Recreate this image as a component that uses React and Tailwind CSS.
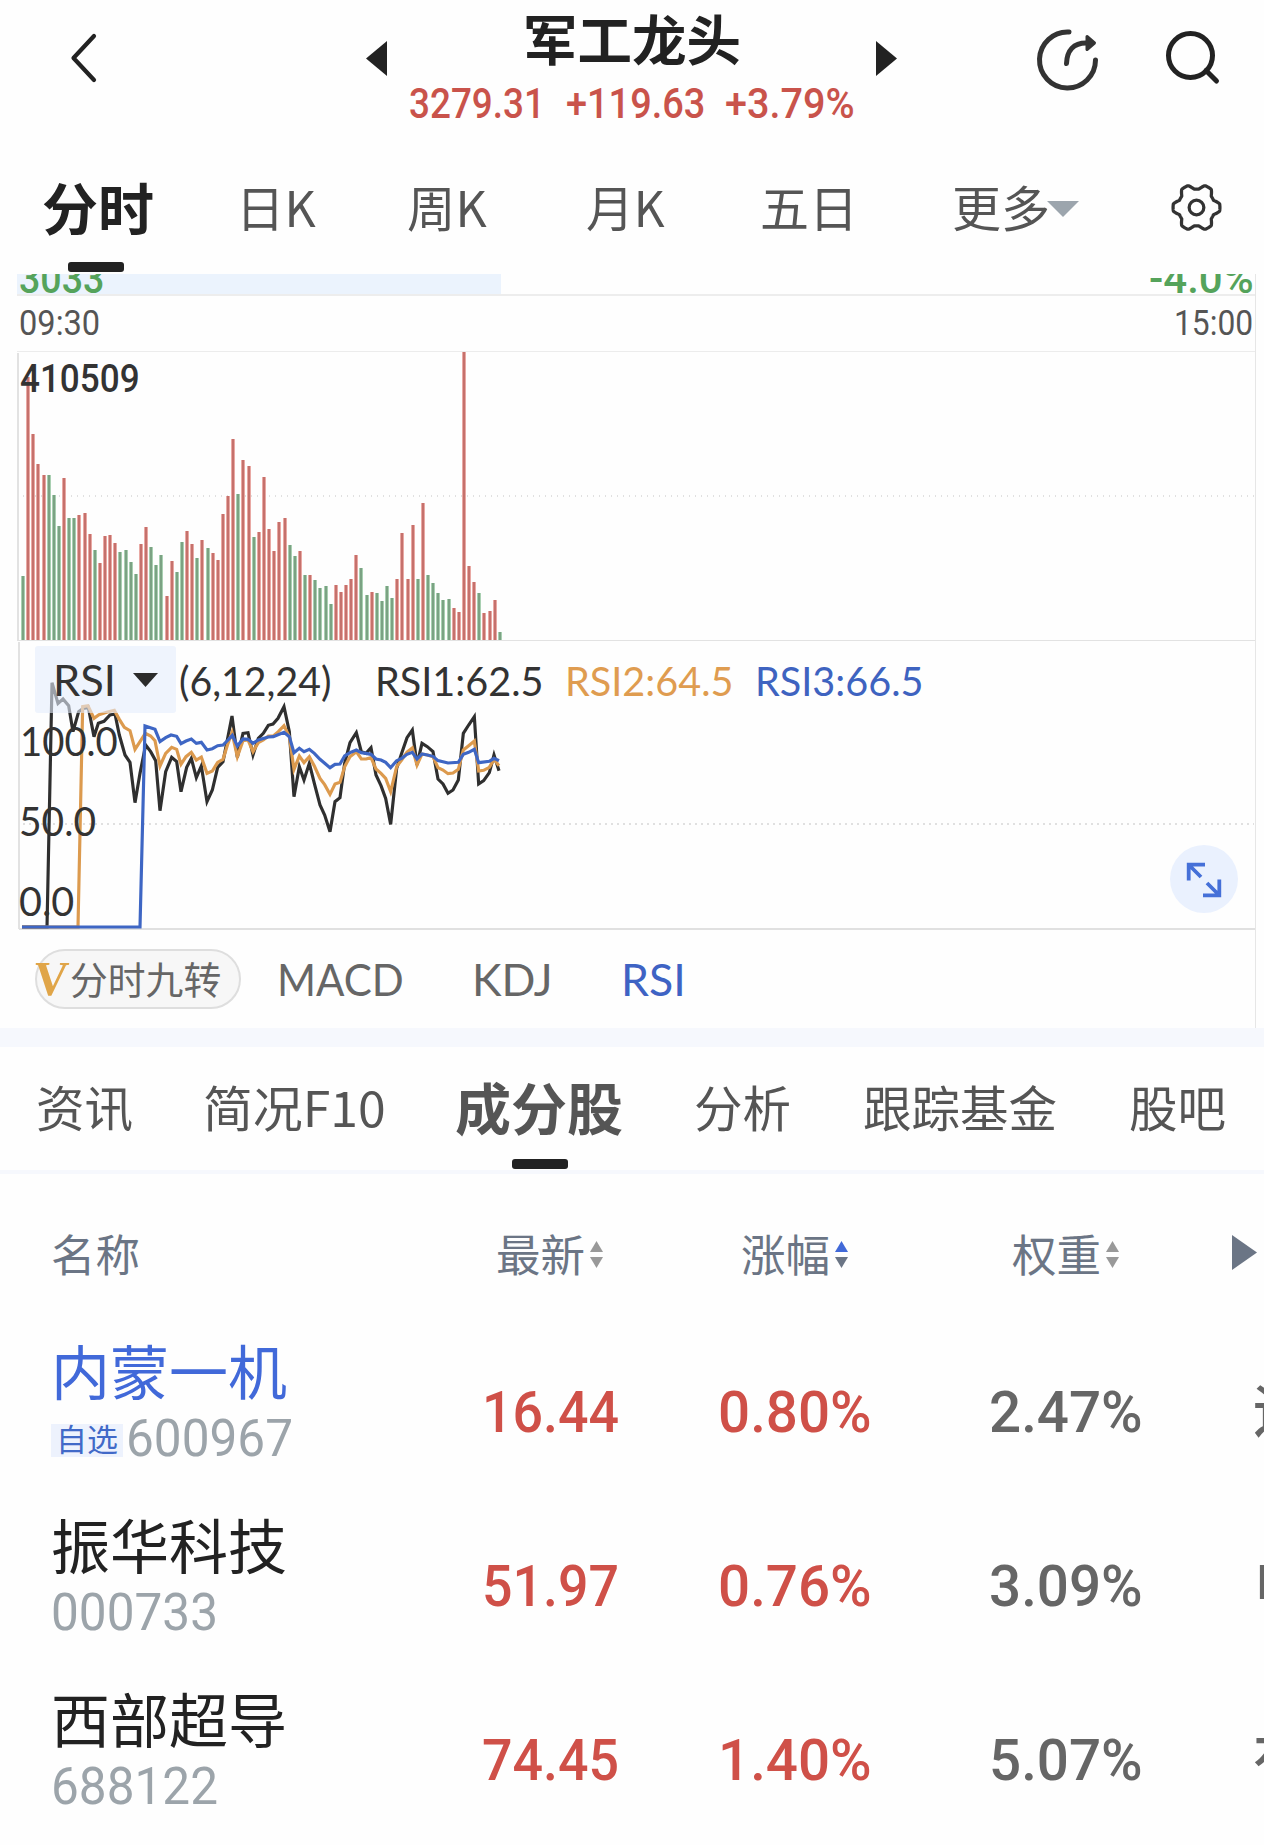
import React, { useLayoutEffect, useRef, useState } from 'react';
import clsx from 'clsx';

const CJK = "font-['Noto_Sans_CJK_SC',sans-serif]";
const NUM = "font-['Roboto','Noto_Sans_CJK_SC',sans-serif] font-medium";
const LATO = "font-['Lato','Noto_Sans_CJK_SC',sans-serif]";

// top edge of each minute bar, in thirds of a pixel, and its direction
const VOLUME = 'G708 R110 R282 R372 R405 G405 G465 G558 R414 G534 G534 R525 R519 R582 G630 R669 R588 R585 R609 G636 G630 G666 G702 R612 R561 G621 G675 G645 R768 R663 G696 G606 R573 R612 G654 R600 G624 R639 R660 R522 R468 R297 G462 R360 R378 G591 R576 R411 R567 R633 R546 R534 G615 G648 R633 G705 R705 G720 G744 G738 G792 R735 R756 R735 R717 R645 G684 G765 R756 G759 G783 G738 G774 R717 R579 R717 R555 G717 R489 G705 G729 G759 G780 G777 R804 R816 R36 R678 R726 G759 R819 R813 R780 G876'.split(' ');

const RSI_LINES = [
  {
    color: '#2f2f2f',
    points: '66,861 141,861 156,128 174,190 189,177 206,197 219,275 236,215 250,205 265,202 282,290 295,250 312,244 330,225 345,222 358,285 375,345 390,367 405,488 420,400 437,315 452,335 467,362 480,512 497,395 515,352 530,365 543,455 560,382 574,355 589,413 604,378 621,485 637,450 653,382 669,365 684,290 696,228 712,352 729,280 744,278 759,345 775,295 790,280 805,256 819,252 834,235 852,200 868,275 882,470 898,380 912,420 928,370 943,430 960,495 974,525 990,575 1005,485 1020,473 1034,370 1050,308 1069,278 1084,335 1098,340 1113,323 1128,405 1143,437 1157,475 1172,553 1190,385 1205,340 1221,293 1237,270 1251,375 1266,310 1282,320 1299,335 1314,417 1329,432 1344,460 1359,450 1375,420 1390,280 1406,255 1423,230 1436,432 1451,422 1468,398 1482,345 1497,392',
  },
  {
    color: '#dc9a4e',
    points: '66,861 234,861 248,200 264,197 282,235 297,224 320,217 343,211 358,238 373,262 390,272 405,328 420,305 436,280 452,288 465,302 480,378 497,340 515,322 530,328 543,373 558,350 574,337 589,360 604,351 621,400 637,393 653,367 669,358 684,310 696,278 712,350 729,302 744,300 759,335 775,308 790,300 805,288 820,288 835,275 852,257 868,290 882,388 898,348 912,368 928,350 943,378 960,415 974,434 990,463 1005,432 1020,427 1034,380 1050,350 1069,335 1084,357 1098,357 1113,353 1128,387 1143,400 1157,415 1172,455 1190,380 1205,360 1221,336 1237,324 1251,375 1266,342 1282,345 1299,350 1314,383 1329,390 1344,401 1359,399 1375,388 1390,330 1406,317 1423,303 1436,393 1451,391 1468,382 1482,358 1497,377',
  },
  {
    color: '#3e66c4',
    points: '66,861 420,861 435,258 465,268 480,305 497,293 513,285 530,289 543,311 558,303 574,297 589,310 604,307 621,330 637,326 653,317 669,315 684,300 697,286 712,318 729,297 744,298 759,310 775,300 805,291 820,290 852,277 868,290 882,338 898,325 912,335 928,328 943,340 960,358 990,383 1005,373 1020,372 1034,348 1050,338 1069,330 1084,338 1098,340 1113,343 1128,357 1143,360 1157,367 1172,383 1190,362 1205,355 1221,343 1237,337 1251,357 1266,342 1282,345 1299,349 1314,362 1344,369 1375,367 1390,343 1406,337 1423,328 1436,368 1468,364 1482,355 1497,362',
  },
];

const STOCKS = [
  { name: '内蒙一机', code: '600967', own: true, price: '16.44', change: '0.80%', weight: '2.47%', sector: '运' },
  { name: '振华科技', code: '000733', price: '51.97', change: '0.76%', weight: '3.09%', sector: '电' },
  { name: '西部超导', code: '688122', price: '74.45', change: '1.40%', weight: '5.07%', sector: '有' },
];

// Squeezes or stretches one line of text to the width of its box
function Fit({ className, children }) {
  const box = useRef(null);
  const text = useRef(null);
  const [ratio, setRatio] = useState(1);

  useLayoutEffect(() => {
    setRatio(box.current.clientWidth / text.current.offsetWidth);
  }, [children]);

  return (
    <div ref={box} className={clsx('shrink-0 whitespace-nowrap', className)}>
      <span ref={text} className="inline-block origin-left" style={{ transform: `scaleX(${ratio})` }}>
        {children}
      </span>
    </div>
  );
}

function GearIcon() {
  const points = Array.from({ length: 180 }, (_, i) => {
    const a = (i / 180) * Math.PI * 2;
    const wave = Math.max(-1, Math.min(0.8, Math.cos(a * 6) * 1.35));
    const r = 20.8 + 2.7 * wave;
    return `${(25 + r * Math.cos(a)).toFixed(2)},${(25 + r * Math.sin(a)).toFixed(2)}`;
  }).join(' ');
  return (
    <svg className="ml-[92px] mt-[4px] size-[51px] shrink-0" viewBox="0 0 50 50" fill="none" stroke="#333" strokeWidth="3.2" strokeLinejoin="round">
      <polygon points={points} />
      <circle cx="25" cy="25" r="7.200" />
    </svg>
  );
}

function Header() {
  return (
    <div className="flex h-[155px] items-start">
      <svg className="ml-[68px] mt-[30px] h-[56px] w-[32px] shrink-0" viewBox="0 0 32 56" fill="none" stroke="#222" strokeWidth="4.200" strokeLinecap="round" strokeLinejoin="round">
        <path d="M26 6 5.500 28 26 50" />
      </svg>
      <svg className="ml-[266px] mt-[41px] h-[35px] w-[21px] shrink-0" viewBox="0 0 21 35" fill="#222">
        <path d="M21 0V35L0 17.500Z" />
      </svg>
      <div className="ml-[22px] w-[446px] shrink-0">
        <Fit className={clsx('ml-[114px] h-[74px] w-[218px] text-[54px] font-bold leading-[76px] text-[#222]', CJK)}>军工龙头</Fit>
        <div className={clsx('mt-[8px] flex h-[44px] text-[42px] leading-[44px] text-[#c9534b]', NUM)}>
          <Fit className="w-[136px]">3279.31</Fit>
          <Fit className="ml-[21px] w-[139px]">+119.63</Fit>
          <Fit className="ml-[20px] w-[130px]">+3.79%</Fit>
        </div>
      </div>
      <svg className="ml-[21px] mt-[41px] h-[35px] w-[21px] shrink-0" viewBox="0 0 21 35" fill="#222">
        <path d="M0 0V35L21 17.500Z" />
      </svg>
      <svg className="ml-[136px] mt-[26px] size-[68px] shrink-0" viewBox="0 0 68 68" fill="none" stroke="#333" strokeWidth="5" strokeLinecap="round">
        <path d="M36 6A28 28 0 1 0 62.500 34" />
        <path d="M33.500 37.500C34 24 41 17 53 17" />
        <path d="M54 10.500 61.500 17 54 23.500Z" fill="#333" strokeWidth="3" strokeLinejoin="round" />
      </svg>
      <svg className="ml-[61px] mt-[27px] size-[64px] shrink-0" viewBox="0 0 64 64" fill="none" stroke="#222" strokeWidth="5" strokeLinecap="round">
        <circle cx="28.500" cy="28.500" r="22" />
        <path d="M44 43.500 54.500 54" />
      </svg>
    </div>
  );
}

function PeriodTabs() {
  return (
    <div>
      <div className={clsx('flex h-[107px] items-center pb-[6px] text-[49px] leading-[60px] text-[#555]', CJK)}>
        <div className="ml-[42px] w-[112px] shrink-0 text-[56px] font-bold text-[#222]">分时</div>
        <Fit className="ml-[82px] w-[80px]">日K</Fit>
        <Fit className="ml-[91px] w-[80px]">周K</Fit>
        <Fit className="ml-[99px] w-[79px]">月K</Fit>
        <div className="ml-[95px] w-[98px] shrink-0">五日</div>
        <div className="ml-[94px] w-[98px] shrink-0">更多</div>
        <svg className="ml-[-3px] mt-[6px] h-[16px] w-[32px] shrink-0" viewBox="0 0 32 16" fill="#9ca5ad">
          <path d="M0 0H32L16 16Z" />
        </svg>
        <GearIcon />
      </div>
      <div className="mb-[2px] ml-[68px] h-[10px] w-[56px] rounded-[3px] bg-[#222]" />
    </div>
  );
}

function VolumeChart() {
  return (
    <div className="relative h-[290px]">
      <svg className="block h-[290px] w-[1238px]" viewBox="17 351 1238 290" shapeRendering="crispEdges">
        <path d="M17 351.500H1255" stroke="#ececec" />
        <path d="M18 353V640" stroke="#e2e2e2" strokeWidth="2" />
        <path d="M23 496H1254" stroke="#e0e0e0" strokeWidth="2" strokeDasharray="1 5" />
        <path d="M17 640.500H1255" stroke="#e2e2e2" />
        {VOLUME.map((bar, i) => {
          const x = Math.round((69 + i * 15.383) / 3);
          const h = (900 - Number(bar.slice(1))) / 3;
          const up = bar[0] === 'R';
          return (
            <g key={i}>
              <rect x={x - 2} y={640 - h} width="4" height={h} fill={up ? '#e9a9a4' : '#a9d0b2'} />
              <rect x={x - 1} y={640 - h} width="2" height={h} fill={up ? '#c5716c' : '#7ba283'} />
            </g>
          );
        })}
      </svg>
      <Fit className={clsx('absolute left-[3px] top-[8px] w-[120px] text-[38px] leading-[40px] text-[#333]', NUM)}>410509</Fit>
    </div>
  );
}

function RsiChart() {
  return (
    <div className={clsx('relative h-[289px] text-[41px] leading-[40px] text-[#333]', LATO)}>
      <svg className="block h-[289px] w-[1238px]" viewBox="17 641 1238 289">
        <path d="M19 642V929" stroke="#e2e2e2" strokeWidth="2" />
        <path d="M23 824H1254" stroke="#e0e0e0" strokeWidth="2" strokeDasharray="2 4" />
        <path d="M19 929H1255" stroke="#e0e0e0" strokeWidth="2" />
        <g transform="translate(0 640) scale(.33333)" fill="none" strokeWidth="9.500" strokeLinejoin="miter">
          {RSI_LINES.map((line) => (
            <polyline key={line.color} points={line.points} stroke={line.color} />
          ))}
        </g>
      </svg>
      {/* Axis labels */}
      <Fit className="absolute left-[3px] top-[80px] w-[98px]">100.0</Fit>
      <Fit className="absolute left-[2px] top-[160px] w-[77px]">50.0</Fit>
      <Fit className="absolute left-[2px] top-[240px] w-[55px]">0.0</Fit>
      {/* Legend */}
      <div className="absolute left-[18px] top-[5px] flex h-[67px] items-center">
        <div className="h-[67px] w-[141px] shrink-0 rounded-[3px] bg-[#e5ecfc]/60" />
        <Fit className="ml-[-123px] w-[63px] text-[42px]">RSI</Fit>
        <svg className="ml-[17px] h-[14px] w-[25px] shrink-0" viewBox="0 0 25 14" fill="#2b2b2b">
          <path d="M0 0H25L12.500 14Z" />
        </svg>
        <Fit className="ml-[21px] mt-[2px] w-[152px]">(6,12,24)</Fit>
        <Fit className="ml-[44px] mt-[2px] w-[168px]">RSI1:62.5</Fit>
        <Fit className="ml-[22px] mt-[2px] w-[168px] text-[#df9c50]">RSI2:64.5</Fit>
        <Fit className="ml-[22px] mt-[2px] w-[168px] text-[#3e63c0]">RSI3:66.5</Fit>
      </div>
      <div className="absolute left-[1153px] top-[204px] flex size-[68px] items-center justify-center rounded-full bg-[#eaf1fe]">
        <svg className="mt-[2px] size-[36px]" viewBox="0 0 36 36" fill="none" stroke="#4570d8" strokeWidth="3.800">
          <path d="M2.700 18.500V2.700H19M3 3 15 15M33.300 17.500V33.300H17M33 33 21 21" />
        </svg>
      </div>
    </div>
  );
}

function ChartPanel() {
  return (
    <div className="ml-[17px] h-[754px] w-[1239px] border-r border-[#e6e6e6]">
      <div className={clsx('flex h-[22px] items-end overflow-hidden border-b-2 border-[#ededed] text-[42px] leading-[30px] text-[#55a35b]', NUM)}>
        <div className="flex h-full w-[484px] items-end bg-[#ebf3fd]">
          <Fit className="ml-[2px] w-[85px]">3033</Fit>
        </div>
        <Fit className="ml-[648px] w-[105px]">-4.0%</Fit>
      </div>
      <div className="flex h-[55px] items-center justify-between pl-[2px] pr-[2px] pt-[1px] text-[35px] leading-[36px] text-[#555] font-['Roboto']">
        <Fit className="w-[81px]">09:30</Fit>
        <Fit className="w-[79px]">15:00</Fit>
      </div>
      <VolumeChart />
      <RsiChart />
      <div className={clsx('flex h-[98px] items-center pl-[18px] text-[44px] leading-[50px] text-[#666]', LATO)}>
        <div className="flex h-[60px] w-[206px] shrink-0 items-center rounded-full border-2 border-[#dedede] bg-[#f7f7f7]">
          <Fit className="ml-[-3px] w-[34px] skew-x-[-5deg] text-[49px] font-bold text-[#e0a548] font-['Liberation_Serif',serif]">V</Fit>
          <div className={clsx('mb-[3px] ml-[2px] text-[37.8px]', CJK)}>分时九转</div>
        </div>
        <Fit className="ml-[36px] w-[127px]">MACD</Fit>
        <Fit className="ml-[68px] w-[81px]">KDJ</Fit>
        <Fit className="ml-[68px] w-[65px] text-[#3e63c4]">RSI</Fit>
      </div>
    </div>
  );
}

function SectionTabs() {
  return (
    <div className="h-[127px] border-b-4 border-[#f6f8fd]">
      <div className={clsx('flex h-[112px] items-center pt-[6px] text-[48.5px] leading-[60px] text-[#555]', CJK)}>
        <div className="ml-[36px] w-[97px] shrink-0">资讯</div>
        <Fit className="ml-[70px] w-[183px]">简况F10</Fit>
        <div className="ml-[69px] w-[168px] shrink-0 text-[56px] font-bold">成分股</div>
        <div className="ml-[71px] w-[97px] shrink-0">分析</div>
        <div className="ml-[72px] w-[194px] shrink-0">跟踪基金</div>
        <div className="ml-[72px] w-[97px] shrink-0">股吧</div>
      </div>
      <div className="ml-[512px] h-[10px] w-[56px] rounded-[3px] bg-[#222]" />
    </div>
  );
}

function Sorter({ asc }) {
  return (
    <svg className="ml-[5px] mt-[2px] h-[27px] w-[13px] shrink-0" viewBox="0 0 13 27">
      <path d="M6.500 0 13 11H0Z" fill={asc ? '#4169d8' : '#999'} />
      <path d="M0 16H13L6.500 27Z" fill={asc ? '#6b7585' : '#999'} />
    </svg>
  );
}

function StockTable() {
  return (
    <div className={clsx('overflow-hidden', CJK)}>
      <div className="flex h-[154px] items-center pt-[4px] text-[44.5px] leading-[50px] text-[#6b7585]">
        <div className="ml-[51px] w-[89px] shrink-0">名称</div>
        <div className="ml-[356px] w-[89px] shrink-0">最新</div>
        <Sorter />
        <div className="ml-[138px] w-[89px] shrink-0">涨幅</div>
        <Sorter asc />
        <div className="ml-[164px] w-[89px] shrink-0">权重</div>
        <Sorter />
        <svg className="ml-[113px] mt-[-1px] h-[35px] w-[25px] shrink-0" viewBox="0 0 25 35" fill="#6b7585">
          <path d="M0 0V35L25 17.500Z" />
        </svg>
      </div>
      {STOCKS.map((stock) => (
        <div key={stock.code} className="flex h-[174px] items-start">
          <div className="ml-[51px] w-[261px] shrink-0">
            <div className={clsx('mt-[8px] h-[70px] text-[59px] leading-[68px]', stock.own ? 'text-[#4169d9]' : 'text-[#222]')}>
              {stock.name}
            </div>
            <div className="mt-[11px] flex h-[44px] items-center">
              {stock.own && (
                <div className="mr-[3px] mt-[2px] h-[33px] w-[72px] shrink-0 bg-[#edf2fd] pl-[5px] text-[31px] leading-[28px] text-[#4169c8]">
                  自选
                </div>
              )}
              <Fit className="w-[167px] text-[51px] leading-[44px] text-[#9ca4aa] font-['Roboto']">{stock.code}</Fit>
            </div>
          </div>
          <div className={clsx('mt-[54px] flex text-[58px] leading-[60px] text-[#666]', NUM)}>
            <Fit className="ml-[170px] w-[137px] text-[#cf5048]">{stock.price}</Fit>
            <Fit className="ml-[99px] w-[154px] text-[#cf5048]">{stock.change}</Fit>
            <Fit className="ml-[117px] w-[154px]">{stock.weight}</Fit>
            <div className="ml-[110px] shrink-0">{stock.sector}</div>
          </div>
        </div>
      ))}
    </div>
  );
}

function App() {
  return (
    <div className="h-[1845px] w-[1264px] overflow-hidden bg-[#fefefe]">
      <Header />
      <PeriodTabs />
      <ChartPanel />
      <div className="h-[19px] bg-[#f6f8fd]" />
      <SectionTabs />
      <StockTable />
    </div>
  );
}

export default App;
